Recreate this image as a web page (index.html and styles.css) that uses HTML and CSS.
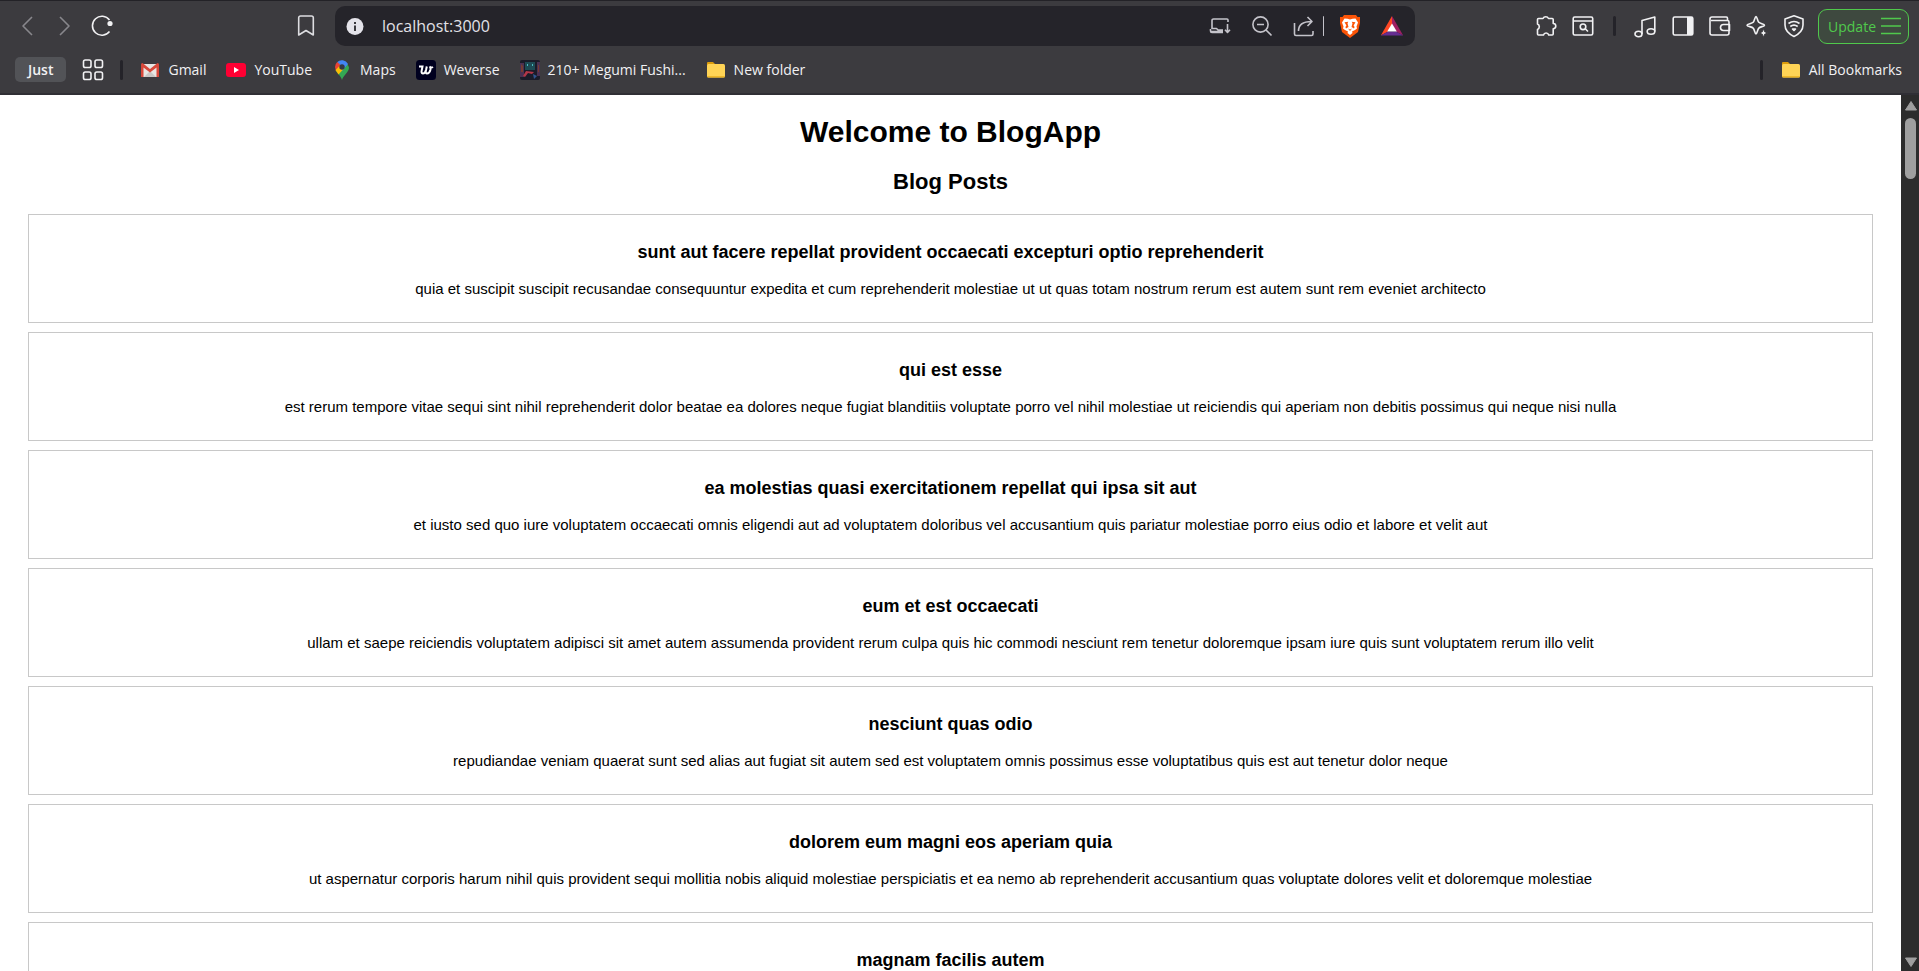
FILE: index.html
```html
<!DOCTYPE html>
<html lang="en">
<head>
<meta charset="utf-8">
<title>BlogApp</title>
<link rel="stylesheet" href="styles.css">
</head>
<body>
<header class="browser">
  <div class="toolbar">
    <div class="nav">
      <button class="icon-btn dim" aria-label="Back"><svg viewBox="0 0 22 22"><path d="M15 2 6 11 15 20"/></svg></button>
      <button class="icon-btn dim" aria-label="Forward"><svg viewBox="0 0 22 22"><path d="M6 2 15 11 6 20"/></svg></button>
      <button class="icon-btn bright" aria-label="Reload"><svg viewBox="0 0 22 22"><path d="M18.500 5A9.500 9.500 0 1 0 18.500 16.500"/><circle cx="19" cy="8.500" r="2.600" fill="currentColor" stroke="none"/></svg></button>
      <button class="icon-btn bookmark" aria-label="Bookmark this page"><svg viewBox="0 0 22 22"><path d="M4.500 1h11a1.800 1.800 0 0 1 1.800 1.800V20L10 15.500 2.700 20V2.800A1.800 1.800 0 0 1 4.500 1Z"/></svg></button>
    </div>
    <div class="address">
      <button class="icon-btn bright" aria-label="Site information"><svg viewBox="0 0 22 22"><circle cx="11" cy="11.500" r="8.500" fill="#e4e3ea" stroke="none"/><path d="M11 10.500V16M11 7v2" stroke="#3a393e" stroke-width="2"/></svg></button>
      <input class="url" type="text" aria-label="Address" value="localhost:3000">
      <div class="page-actions">
        <button class="icon-btn soft" aria-label="Install app"><svg viewBox="0 0 22 22"><path d="M3 14V5.500A1.500 1.500 0 0 1 4.500 4H18a1 1 0 0 1 1 1v2M3 13.500h4.500l1.500 1.500h5M1.500 14v2a1.500 1.500 0 0 0 1.500 1.500h11M2 16.500h12M18.500 9v8M16 14.800l2.500 2.700 2.500-2.700"/></svg></button>
        <button class="icon-btn soft" aria-label="Zoom out"><svg viewBox="0 0 22 22"><circle cx="9.500" cy="9.500" r="7.600"/><path d="M6 9.500h7M15 15l5.500 5.500"/></svg></button>
        <button class="icon-btn soft" aria-label="Share"><svg viewBox="0 0 22 22"><path d="M1.500 8v11a1.500 1.500 0 0 0 1.500 1.500h15.500a1.500 1.500 0 0 0 1.500-1.500v-3M5.500 16c0-6 3.500-9.500 13-9.500M14.500 2l4.500 4.500-4.500 4.500"/></svg></button>
        <span class="rule light"></span>
        <button class="icon-btn large" aria-label="Brave Shields"><svg viewBox="0 0 24 24" stroke="none"><path fill="#fb5407" d="M6 1h12l1.500 2H22v6l-2 9-8 6-8-6L2 9V3h2.500Z"/><path fill="#fff" d="m6.500 4.500 3 .3 2.500.7 2.500-.7 3-.3 2.500 4-1.500 4 .5 2-2 1.500-3 1.500 .5 1.500L12 21l-2.500-2 .5-1.500L7 16l-2-1.500.5-2-1.500-4Z"/><path fill="#fb5407" d="m6.500 8.300 3.800-.6-.8 1.600 1 3.700L8 14.500l-.6-1.500 1-1.500ZM17.500 8.300l-3.800-.6.8 1.600-1 3.700 2.500 1.500.6-1.500-1-1.500ZM10 14.500l2 1 2-1-2 2.500Z"/></svg></button>
        <button class="icon-btn large" aria-label="Brave Rewards"><svg viewBox="0 0 24 24" stroke="none"><path fill="#ff4724" d="M12 2 .8 21.500 8 17.500l4-7Z"/><path fill="#9e1f63" d="M12 2v8.500l4 7 7.200 4Z"/><path fill="#662d91" d="m.8 21.500 7.200-4h8l7.200 4Z"/><path fill="#fff" d="m12 9.500 4.800 8H7.200Z"/></svg></button>
      </div>
    </div>
    <div class="tools">
      <button class="icon-btn bright" aria-label="Extensions"><svg viewBox="0 0 22 22"><path d="M3.500 3.500H8a3 3 0 0 1 5.500 0h3.700a1 1 0 0 1 1 1v4a2.600 2.600 0 0 1 0 5.200V19a1 1 0 0 1-1 1h-3.500a2.700 2.700 0 0 0-5.200 0h-5a1 1 0 0 1-1-1v-4.500a3 3 0 0 0 0-5.500V4.500a1 1 0 0 1 1-1Z"/></svg></button>
      <button class="icon-btn bright" aria-label="Search tabs"><svg viewBox="0 0 22 22"><rect x="1.200" y="2" width="19.500" height="18" rx="1.500"/><path d="M1.500 6h19M13.500 14l2.500 2.500"/><circle cx="11" cy="11.800" r="2.800"/></svg></button>
      <span class="rule wide"></span>
      <button class="icon-btn bright" aria-label="Playlist"><svg viewBox="0 0 22 22"><ellipse cx="3.500" cy="19" rx="3.500" ry="2.700"/><ellipse cx="16" cy="16.500" rx="3.800" ry="2.700"/><path d="M7 19V5.500L19.800 2v14.500"/></svg></button>
      <button class="icon-btn bright" aria-label="Sidebar"><svg viewBox="0 0 22 22"><rect x="1.200" y="2" width="19.600" height="18" rx="1.500"/><path fill="currentColor" stroke="none" d="M15 2h5a1 1 0 0 1 1 1v16a1 1 0 0 1-1 1h-5Z"/></svg></button>
      <button class="icon-btn bright" aria-label="Wallet"><svg viewBox="0 0 22 22"><path d="M18.500 5.500V3.200A1.200 1.200 0 0 0 17.300 2H3a2 2 0 0 0-2 2v14a2 2 0 0 0 2 2h15a2 2 0 0 0 2-2V7a1.500 1.500 0 0 0-1.500-1.500H2M20.500 9.500h-6a3 3 0 0 0 0 6h6Z"/></svg></button>
      <button class="icon-btn bright" aria-label="Leo AI"><svg viewBox="0 0 22 22"><path d="M10 1.500c1 0 1.500 4.500 2.800 5.800 1.300 1.300 5.700 1.700 5.700 2.900s-4.400 1.500-5.700 2.900C11.500 14.400 11 19 10 19s-1.500-4.600-2.800-5.900C5.900 11.700 1 11.400 1 10.200s4.900-1.600 6.200-2.900C8.500 6 9 1.500 10 1.500Z"/><path fill="currentColor" stroke="#3c3b3f" stroke-width="1" d="m17.500 13.500 1.200 3.300 3.300 1.200-3.300 1.200-1.200 3.300-1.200-3.300L13 18l3.300-1.200Z"/></svg></button>
      <button class="icon-btn bright" aria-label="VPN"><svg viewBox="0 0 22 22"><path d="M11 .8 20 4v6c0 5.500-4 9-9 11.500C6 19 2 15.500 2 10V4ZM5.500 8.500q5.500-4 11 0M7.300 11.500q3.700-2.800 7.400 0"/><path fill="currentColor" d="M9.500 14h3L11 15.500Z"/></svg></button>
      <button class="update">Update<svg viewBox="0 0 22 18"><path d="M1 1.500h20M1 9h20M1 16.500h20"/></svg></button>
    </div>
  </div>
  <nav class="bookmarks">
    <button class="group">Just</button>
    <button class="icon-btn bright apps" aria-label="Apps"><svg viewBox="0 0 22 22"><rect x="1.500" y="1" width="7.500" height="7.500" rx="1.800"/><rect x="13" y="1" width="7.500" height="7.500" rx="1.800"/><rect x="1.500" y="13" width="7.500" height="7.500" rx="1.800"/><rect x="13" y="13" width="7.500" height="7.500" rx="1.800"/></svg></button>
    <span class="rule first"></span>
    <a href="#"><svg viewBox="0 0 20 20"><path fill="#e8e6e3" d="M2 4h16v13H2Z"/><path fill="#c9c7c5" d="m4 17 6-6 6 6Z"/><path fill="#d8483a" d="M1 4.500A1.500 1.500 0 0 1 2.500 3L10 9l7.500-6A1.500 1.500 0 0 1 19 4.500V17h-2.500V7.500L10 12.500l-6.500-5V17H1Z"/></svg>Gmail</a>
    <a href="#"><svg viewBox="0 0 20 20"><rect y="3" width="20" height="14" rx="3" fill="#ff0033"/><path fill="#fff" d="m8 7 5 3-5 3Z"/></svg>YouTube</a>
    <a href="#"><svg viewBox="0 0 20 20"><path fill="#34a853" d="M3.700 10.500C5.500 14 8.500 15 10 20c1.300-5 7-7.500 7-12.500L15.500 4Z"/><path fill="#4285f4" d="M5 2.200A7 7 0 0 1 16 4l-6 7Z"/><path fill="#ea4335" d="M3 7a7 7 0 0 1 2.200-5L9 5.500 4 11Z"/><path fill="#fbbc04" d="M3.500 10 8 5.500l3.500 3.500-5 5.500Z"/><circle cx="10" cy="7" r="2.700" fill="#343944"/></svg>Maps</a>
    <a href="#"><svg viewBox="0 0 20 20"><rect width="20" height="20" rx="3.500" fill="#00001f"/><path d="M3 6.500h3.500l-1 5q0 2 1.500 2 2 0 3-3.500l.8-3.500-1 4.500q-.3 2.500 1.200 2.500 2.500 0 3.500-4 .3-2-.8-3 1.300 1.800 3.300.5" fill="none" stroke="#fff" stroke-width="2"/></svg>Weverse</a>
    <a href="#"><svg viewBox="0 0 20 20"><rect width="20" height="20" rx="2" fill="#1b1b29"/><path fill="#4b3153" d="M0 3h4v14H0ZM17 2h3v14h-3Z"/><path fill="#773c31" d="m1 4 2 2v6H1ZM18 5h1v7h-1Z"/><path fill="#1d4a54" d="M5 2h10v8H5Z"/><path fill="#4dbac1" d="M7 4h1v2H7ZM12 4h1v2h-1Z"/><path fill="#b33648" d="m6 11 8 1-2 2-4-1-3 4-2-1Z"/><path fill="#31558f" d="m13 14 4 2-3 3Z"/></svg>210+ Megumi Fushi...</a>
    <a href="#"><svg viewBox="0 0 20 20"><path fill="#dc9d0c" d="M1 3a1 1 0 0 1 1-1h5l2 2h8v4H1Z"/><rect x="1" y="4" width="18" height="13.500" rx="1.500" fill="#ffd456"/><path fill="#eeb729" d="M1 16h18a1.500 1.500 0 0 1-1.500 1.500h-15A1.500 1.500 0 0 1 1 16Z"/></svg>New folder</a>
    <span class="rule last"></span>
    <a href="#"><svg viewBox="0 0 20 20"><path fill="#dc9d0c" d="M1 3a1 1 0 0 1 1-1h5l2 2h8v4H1Z"/><rect x="1" y="4" width="18" height="13.500" rx="1.500" fill="#ffd456"/><path fill="#eeb729" d="M1 16h18a1.500 1.500 0 0 1-1.500 1.500h-15A1.500 1.500 0 0 1 1 16Z"/></svg>All Bookmarks</a>
  </nav>
</header>
<div class="viewport">
  <main class="page">
    <h1>Welcome to BlogApp</h1>
    <h2>Blog Posts</h2>
    <div class="posts">
      <article class="post"><h3>sunt aut facere repellat provident occaecati excepturi optio reprehenderit</h3><p>quia et suscipit suscipit recusandae consequuntur expedita et cum reprehenderit molestiae ut ut quas totam nostrum rerum est autem sunt rem eveniet architecto</p></article>
      <article class="post"><h3>qui est esse</h3><p>est rerum tempore vitae sequi sint nihil reprehenderit dolor beatae ea dolores neque fugiat blanditiis voluptate porro vel nihil molestiae ut reiciendis qui aperiam non debitis possimus qui neque nisi nulla</p></article>
      <article class="post"><h3>ea molestias quasi exercitationem repellat qui ipsa sit aut</h3><p>et iusto sed quo iure voluptatem occaecati omnis eligendi aut ad voluptatem doloribus vel accusantium quis pariatur molestiae porro eius odio et labore et velit aut</p></article>
      <article class="post"><h3>eum et est occaecati</h3><p>ullam et saepe reiciendis voluptatem adipisci sit amet autem assumenda provident rerum culpa quis hic commodi nesciunt rem tenetur doloremque ipsam iure quis sunt voluptatem rerum illo velit</p></article>
      <article class="post"><h3>nesciunt quas odio</h3><p>repudiandae veniam quaerat sunt sed alias aut fugiat sit autem sed est voluptatem omnis possimus esse voluptatibus quis est aut tenetur dolor neque</p></article>
      <article class="post"><h3>dolorem eum magni eos aperiam quia</h3><p>ut aspernatur corporis harum nihil quis provident sequi mollitia nobis aliquid molestiae perspiciatis et ea nemo ab reprehenderit accusantium quas voluptate dolores velit et doloremque molestiae</p></article>
      <article class="post"><h3>magnam facilis autem</h3></article>
    </div>
  </main>
  <div class="scrollbar">
    <svg viewBox="0 0 14 12"><path d="M7 1.500 12.500 10H1.500Z"/></svg>
    <div class="track"><div class="thumb"></div></div>
    <svg viewBox="0 0 14 12"><path d="M7 10.500 12.500 2H1.500Z"/></svg>
  </div>
</div>
</body>
</html>
```

FILE: styles.css
```css
* { box-sizing: border-box; }
body {
  margin: 0;
  height: 100vh;
  display: flex;
  flex-direction: column;
  overflow: hidden;
  background: #fff;
  font-family: "Liberation Sans", Arial, sans-serif;
}
button { padding: 0; border: 0; background: none; font: inherit; color: inherit; }
svg { display: block; flex: none; }

/* Browser chrome */
.browser {
  flex: none;
  background: #3c3b3f;
  border-top: 1px solid #232227;
  border-bottom: 2px solid #302f35;
  color: #f1f1f3;
  font-family: "Open Sans", "Noto Sans", sans-serif;
  font-size: 14px;
}
.toolbar {
  display: flex;
  align-items: center;
  padding: 5px 10px 0 17px;
}
.icon-btn { flex: none; width: 22px; height: 22px; }
.icon-btn svg {
  width: 100%;
  height: 100%;
  fill: none;
  stroke: currentColor;
  stroke-width: 1.6;
  stroke-linejoin: round;
  overflow: visible;
}
.large { width: 24px; height: 24px; }
.large svg { stroke: none; }
.dim { color: #88878c; }
.bright { color: #f1f1f3; }
.soft { color: #c4c3ca; }
.nav { flex: none; display: flex; gap: 15px; width: 318px; }
.bookmark { margin-left: auto; margin-right: 17px; color: #dddde1; }
.address {
  flex: 1;
  min-width: 0;
  height: 40px;
  display: flex;
  align-items: center;
  padding: 0 13px 0 9px;
  border-radius: 10px;
  background: #25242a;
}
.url {
  flex: 1;
  min-width: 0;
  margin-left: 16px;
  padding: 0;
  border: 0;
  outline: 0;
  background: none;
  color: #e2e1e7;
  font: 16px "Open Sans", "Noto Sans", sans-serif;
}
.page-actions { display: flex; align-items: center; gap: 20px; }
.rule { flex: none; width: 3px; height: 20px; border-radius: 2px; background: #242329; }
.light { width: 1px; background: #c4c3ca; margin: 0 -6px 0 -12px; }
.page-actions .large { margin-right: -2px; }
.tools { flex: none; display: flex; align-items: center; gap: 15px; margin-left: 120px; }
.wide { margin: 0 4px; }
.update {
  display: flex;
  align-items: center;
  gap: 4px;
  height: 35px;
  margin-left: -2px;
  padding: 0 6px 0 9px;
  border: 1px solid #50c94c;
  border-radius: 9px;
  background: #3e493f;
  color: #50c94c;
}
.update svg { width: 22px; height: 18px; stroke: currentColor; stroke-width: 1.6; }
.bookmarks {
  display: flex;
  align-items: center;
  gap: 20px;
  height: 47px;
  padding: 0 17px 0 15px;
}
.bookmarks a {
  display: flex;
  align-items: center;
  gap: 8px;
  color: inherit;
  text-decoration: none;
  white-space: nowrap;
}
.bookmarks a svg { width: 20px; height: 20px; }
.group {
  height: 25px;
  padding: 0 13px;
  border-radius: 5px;
  background: #525357;
  font-weight: 600;
}
.apps { margin: 0 -4px; }
.first { margin-right: -3px; }
.last { margin-left: auto; margin-right: -2px; }

/* Page */
.viewport { flex: 1; min-height: 0; display: flex; }
.page { flex: 1; min-width: 0; overflow: hidden; padding: 20px 28px 0; text-align: center; color: #000; }
h1, h2, h3, p { margin: 0; }
h1 { font-size: 30px; line-height: 34px; }
h2 { margin: 20px 0; font-size: 22px; line-height: 25px; }
.posts { display: grid; gap: 9px; }
.post { padding: 27px 15px 25px; border: 1px solid #c8c8c8; }
h3 { margin-bottom: 18px; font-size: 18px; line-height: 20px; }
p { font-size: 15px; line-height: 17px; }

.scrollbar {
  flex: none;
  width: 18px;
  display: flex;
  flex-direction: column;
  align-items: center;
  gap: 6px;
  padding: 5px 0 3px 1px;
  background: #2c2c2c;
}
.scrollbar svg { width: 14px; height: 12px; fill: #9f9f9f; stroke: #9f9f9f; stroke-linejoin: round; }
.track { flex: 1; }
.thumb { width: 11px; height: 61px; border-radius: 6px; background: #9f9f9f; }
```
